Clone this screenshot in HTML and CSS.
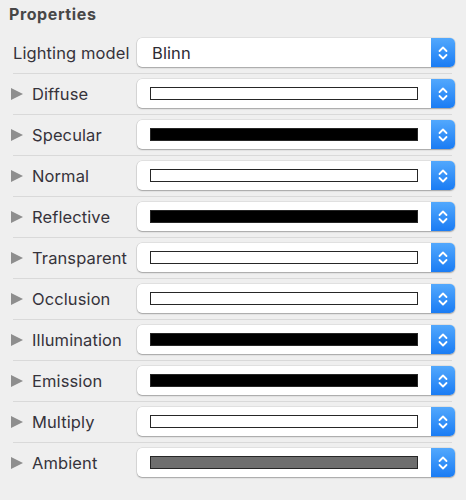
FILE: index.html
```html
<!DOCTYPE html>
<html>
<head>
<meta charset="utf-8">
<link rel="stylesheet" href="styles.css">
</head>
<body>
<div class="panel">
  <h1 class="title">Properties</h1>
  <div class="row row-first">
    <span class="label">Lighting model</span>
    <div class="popup">
      <span class="value">Blinn</span>
      <span class="stepper"><svg width="12" height="16" viewBox="0 0 12 16"><path d="M2.5 6 L6 2.5 L9.5 6 M2.5 10 L6 13.5 L9.5 10" fill="none" stroke="#fff" stroke-width="1.8" stroke-linecap="round" stroke-linejoin="round"/></svg></span>
    </div>
  </div>
  <div class="row">
    <span class="label"><span class="tri"></span>Diffuse</span>
    <div class="popup"><span class="well well-white"></span><span class="stepper"><svg width="12" height="16" viewBox="0 0 12 16"><path d="M2.5 6 L6 2.5 L9.5 6 M2.5 10 L6 13.5 L9.5 10" fill="none" stroke="#fff" stroke-width="1.8" stroke-linecap="round" stroke-linejoin="round"/></svg></span></div>
  </div>
  <div class="row">
    <span class="label"><span class="tri"></span>Specular</span>
    <div class="popup"><span class="well well-black"></span><span class="stepper"><svg width="12" height="16" viewBox="0 0 12 16"><path d="M2.5 6 L6 2.5 L9.5 6 M2.5 10 L6 13.5 L9.5 10" fill="none" stroke="#fff" stroke-width="1.8" stroke-linecap="round" stroke-linejoin="round"/></svg></span></div>
  </div>
  <div class="row">
    <span class="label"><span class="tri"></span>Normal</span>
    <div class="popup"><span class="well well-white"></span><span class="stepper"><svg width="12" height="16" viewBox="0 0 12 16"><path d="M2.5 6 L6 2.5 L9.5 6 M2.5 10 L6 13.5 L9.5 10" fill="none" stroke="#fff" stroke-width="1.8" stroke-linecap="round" stroke-linejoin="round"/></svg></span></div>
  </div>
  <div class="row">
    <span class="label"><span class="tri"></span>Reflective</span>
    <div class="popup"><span class="well well-black"></span><span class="stepper"><svg width="12" height="16" viewBox="0 0 12 16"><path d="M2.5 6 L6 2.5 L9.5 6 M2.5 10 L6 13.5 L9.5 10" fill="none" stroke="#fff" stroke-width="1.8" stroke-linecap="round" stroke-linejoin="round"/></svg></span></div>
  </div>
  <div class="row">
    <span class="label"><span class="tri"></span>Transparent</span>
    <div class="popup"><span class="well well-white"></span><span class="stepper"><svg width="12" height="16" viewBox="0 0 12 16"><path d="M2.5 6 L6 2.5 L9.5 6 M2.5 10 L6 13.5 L9.5 10" fill="none" stroke="#fff" stroke-width="1.8" stroke-linecap="round" stroke-linejoin="round"/></svg></span></div>
  </div>
  <div class="row">
    <span class="label"><span class="tri"></span>Occlusion</span>
    <div class="popup"><span class="well well-white"></span><span class="stepper"><svg width="12" height="16" viewBox="0 0 12 16"><path d="M2.5 6 L6 2.5 L9.5 6 M2.5 10 L6 13.5 L9.5 10" fill="none" stroke="#fff" stroke-width="1.8" stroke-linecap="round" stroke-linejoin="round"/></svg></span></div>
  </div>
  <div class="row">
    <span class="label"><span class="tri"></span>Illumination</span>
    <div class="popup"><span class="well well-black"></span><span class="stepper"><svg width="12" height="16" viewBox="0 0 12 16"><path d="M2.5 6 L6 2.5 L9.5 6 M2.5 10 L6 13.5 L9.5 10" fill="none" stroke="#fff" stroke-width="1.8" stroke-linecap="round" stroke-linejoin="round"/></svg></span></div>
  </div>
  <div class="row">
    <span class="label"><span class="tri"></span>Emission</span>
    <div class="popup"><span class="well well-black"></span><span class="stepper"><svg width="12" height="16" viewBox="0 0 12 16"><path d="M2.5 6 L6 2.5 L9.5 6 M2.5 10 L6 13.5 L9.5 10" fill="none" stroke="#fff" stroke-width="1.8" stroke-linecap="round" stroke-linejoin="round"/></svg></span></div>
  </div>
  <div class="row">
    <span class="label"><span class="tri"></span>Multiply</span>
    <div class="popup"><span class="well well-white"></span><span class="stepper"><svg width="12" height="16" viewBox="0 0 12 16"><path d="M2.5 6 L6 2.5 L9.5 6 M2.5 10 L6 13.5 L9.5 10" fill="none" stroke="#fff" stroke-width="1.8" stroke-linecap="round" stroke-linejoin="round"/></svg></span></div>
  </div>
  <div class="row row-last">
    <span class="label"><span class="tri"></span>Ambient</span>
    <div class="popup"><span class="well well-gray"></span><span class="stepper"><svg width="12" height="16" viewBox="0 0 12 16"><path d="M2.5 6 L6 2.5 L9.5 6 M2.5 10 L6 13.5 L9.5 10" fill="none" stroke="#fff" stroke-width="1.8" stroke-linecap="round" stroke-linejoin="round"/></svg></span></div>
  </div>
</div>
</body>
</html>
```

FILE: styles.css
```css
html, body {
  margin: 0;
  padding: 0;
  background: #efefef;
}
body {
  width: 466px;
  height: 500px;
  overflow: hidden;
  font-family: Inter, "Noto Sans", sans-serif;
  color: #36333b;
}
.panel {
  padding: 0 11px 0 13px;
}
.title {
  margin: 0 0 0 -4px;
  padding-top: 5px;
  font-size: 16px;
  line-height: 18px;
  font-weight: 700;
  letter-spacing: 0.6px;
  color: #474747;
}
.row {
  display: grid;
  grid-template-columns: 124px 1fr;
  align-items: center;
  padding: 5px 0 6px 0;
  margin-right: 3px;
  border-bottom: 1px solid #d9d9d9;
}
.row-first {
  padding-top: 15px;
}
.row-last {
  border-bottom: none;
}
.label {
  display: flex;
  align-items: center;
  font-size: 16.5px;
  letter-spacing: 0.1px;
  white-space: nowrap;
}
.tri {
  width: 0;
  height: 0;
  margin-left: -2px;
  margin-right: 9px;
  border-left: 12px solid #8e8e8e;
  border-top: 6.5px solid transparent;
  border-bottom: 6.5px solid transparent;
}
.popup {
  display: flex;
  align-items: center;
  height: 29px;
  margin-right: -3px;
  background: #fff;
  border-radius: 5px;
  box-shadow: 0 0 0 0.5px rgba(0,0,0,0.12), 0 1px 1.5px rgba(0,0,0,0.28);
}
.value {
  flex: 1;
  padding-left: 15px;
  font-size: 16.5px;
  letter-spacing: 0.1px;
  color: #2e2b33;
}
.well {
  flex: 1;
  height: 13px;
  margin: 0 13px;
  box-sizing: border-box;
  border: 1.5px solid #262626;
}
.well-white { background: #fff; }
.well-black { background: #000; }
.well-gray { background: #6e6e6e; }
.stepper {
  display: flex;
  align-items: center;
  justify-content: center;
  align-self: stretch;
  width: 24px;
  border-radius: 0 5px 5px 0;
  background: linear-gradient(#52a8fd, #1a7cf4);
}
.stepper svg {
  display: block;
}
```
